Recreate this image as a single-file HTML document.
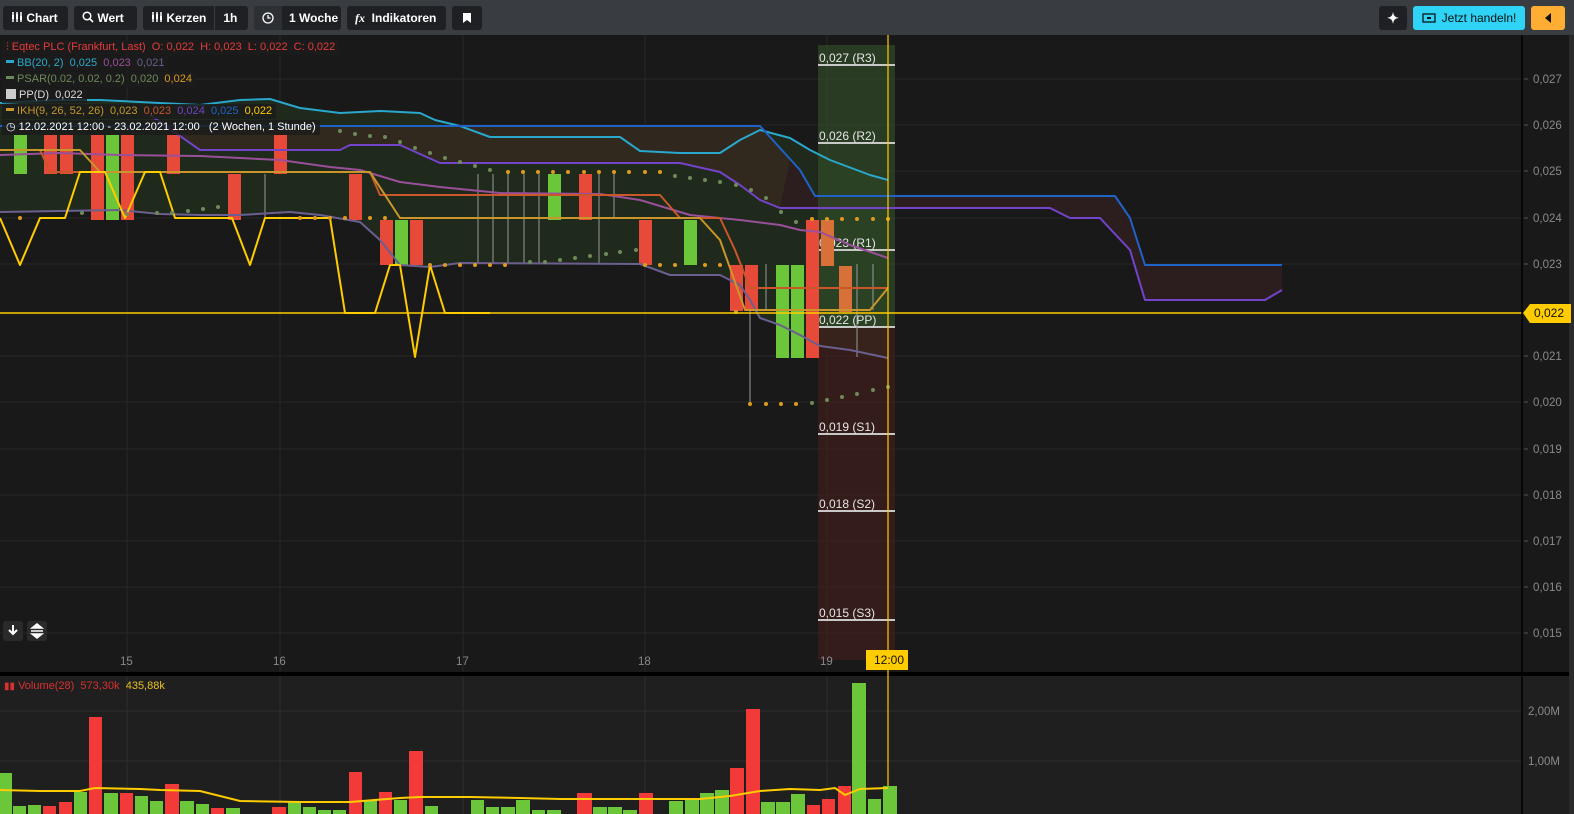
<!DOCTYPE html>
<html><head><meta charset="utf-8"><style>
*{margin:0;padding:0;box-sizing:border-box}
body{width:1574px;height:814px;background:#191919;font-family:"Liberation Sans",Arial,sans-serif;overflow:hidden;position:relative}
#top{position:absolute;left:0;top:0;width:1574px;height:35px;background:#393c41}
.b{position:absolute;top:6px;height:24px;background:#1e2024;border-radius:3px;color:#fff;font-size:12px;font-weight:bold;line-height:24px;display:flex;align-items:center;white-space:nowrap;overflow:hidden}
.b span{padding:0 8px;white-space:nowrap}
.leg{position:absolute;left:2px;font-size:11px;height:15px;line-height:15px;background:rgba(28,28,28,.85);padding:0 4px;white-space:nowrap}
</style></head><body>
<div id="top">
 <div class="b" style="left:3px;width:65px"><span><svg width="12" height="12" viewBox="0 0 12 12" style="vertical-align:-1px"><g stroke="#fff" stroke-width="1.5"><path d="M2 1v10M6 1v10M10 1v10"/></g><rect x="1" y="4" width="2" height="4" fill="#fff"/><rect x="5" y="3" width="2" height="5" fill="#fff"/><rect x="9" y="5" width="2" height="4" fill="#fff"/></svg> Chart</span></div>
 <div class="b" style="left:74px;width:63px"><span><svg width="12" height="12" viewBox="0 0 12 12" style="vertical-align:-1px"><circle cx="5" cy="5" r="3.8" stroke="#fff" stroke-width="1.5" fill="none"/><path d="M8 8l3 3" stroke="#fff" stroke-width="1.6"/></svg> Wert</span></div>
 <div class="b" style="left:143px;width:105px"><span><svg width="12" height="12" viewBox="0 0 12 12" style="vertical-align:-1px"><g stroke="#fff" stroke-width="1.5"><path d="M2 1v10M6 1v10M10 1v10"/></g><rect x="1" y="4" width="2" height="4" fill="#fff"/><rect x="5" y="3" width="2" height="5" fill="#fff"/><rect x="9" y="5" width="2" height="4" fill="#fff"/></svg> Kerzen</span><span style="border-left:1px solid #393c41;padding:0 8px">1h</span></div>
 <div class="b" style="left:254px;width:87px"><span style="background:#2c2f33;height:24px;padding:0 8px;border-radius:3px 0 0 3px;display:flex;align-items:center"><svg width="12" height="12" viewBox="0 0 12 12"><circle cx="6" cy="6" r="5" stroke="#fff" stroke-width="1.3" fill="none"/><path d="M6 3v3h2.5" stroke="#fff" stroke-width="1.3" fill="none"/></svg></span><span style="padding:0 0 0 7px">1 Woche</span></div>
 <div class="b" style="left:347px;width:99px"><span><i style="font-family:'Liberation Serif';font-weight:bold">fx</i>&nbsp; Indikatoren</span></div>
 <div class="b" style="left:452px;width:30px;justify-content:center"><svg width="8" height="10"><path d="M0 0h8v10L4 7 0 10z" fill="#fff"/></svg></div>
 <div class="b" style="left:1379px;width:28px;justify-content:center;color:#fff;font-size:14px">✦</div>
 <div class="b" style="left:1413px;width:112px;background:#2fd3f6;color:#111;font-weight:normal;justify-content:center"><svg width="14" height="10" style="margin-right:6px"><rect x="1" y="1" width="12" height="8" stroke="#111" fill="none" stroke-width="1.3"/><rect x="5" y="4" width="4" height="2" fill="#111"/></svg>Jetzt handeln!</div>
 <div class="b" style="left:1531px;width:34px;background:#ffad33;justify-content:center"><svg width="6" height="10"><path d="M6 0v10L0 5z" fill="#111"/></svg></div>
</div>

<svg style="position:absolute;left:0;top:35px;width:1574px;height:779px" width="1574" height="779" viewBox="0 35 1574 779" preserveAspectRatio="none">
<rect x="0" y="676" width="1574" height="138" fill="#1f1f1f"/>
<rect x="0" y="672" width="1574" height="4" fill="#000"/>
<rect x="1569" y="35" width="5" height="779" fill="#2a2a2a"/>
<g stroke="#262626" stroke-width="1">
<path d="M0 79H1522M0 125H1522M0 171H1522M0 218H1522M0 264H1522M0 356H1522M0 402H1522M0 449H1522M0 495H1522M0 541H1522M0 587H1522M0 633H1522"/>
<path d="M127 35V672M280 35V672M463 35V672M645 35V672M827 35V672"/>
<path d="M0 711H1522M0 761H1522M127 676V814M280 676V814M463 676V814M645 676V814M827 676V814" stroke="#2c2c2c"/>
</g>
<polygon fill="#1f291c" points="0,103 60,100 100,100 200,105 240,100 270,99 300,108 340,113 380,111 420,113 435,120 460,126 490,137 620,137 640,151 680,153 720,153 740,140 760,130 790,138 810,150 830,160 870,175 888,180 888,358 850,350 820,346 800,335 780,325 760,318 750,300 740,285 720,275 670,275 640,264 460,263 430,267 400,265 380,240 360,222 320,215 290,212 240,215 200,215 160,214 120,210 60,211 0,212"/>
<polygon fill="#33291f" opacity=".9" points="150,126 760,126 780,148 790,160 780,208 760,200 740,185 720,172 680,163 440,163 400,145 350,145 340,150 200,150 150,115"/>
<polygon fill="#2c1e1e" points="790,160 800,170 815,196 1115,196 1130,218 1145,265 1282,265 1282,290 1265,300 1145,300 1130,250 1100,218 1070,218 1050,208 780,208"/>
<rect x="818" y="45" width="77" height="282" fill="#34512a" opacity=".6"/>
<rect x="818" y="327" width="77" height="333" fill="#4a1f1c" opacity=".55"/>
<g stroke="#c8c8c8" stroke-width="2"><path d="M818 65H895M818 143H895M818 250H895M818 327H895M818 434H895M818 511H895M818 620H895"/></g>
<g fill="#e6e6e6" font-size="12"><text x="819" y="62">0,027 (R3)</text><text x="819" y="140">0,026 (R2)</text><text x="819" y="247">0,023 (R1)</text><text x="819" y="324">0,022 (PP)</text><text x="819" y="431">0,019 (S1)</text><text x="819" y="508">0,018 (S2)</text><text x="819" y="617">0,015 (S3)</text></g>
<g stroke="#9a9a9a" stroke-width="1"><path d="M478 174V264M493 174V264M508 174V264M524 174V264M539 174V264M584 174V218M599 174V264M614 174V218M750 310V402M766 264V310M857 264V357M873 264V310M265 174V218M234 174V220M97 220V135"/></g>
<g>
<rect x="14" y="135" width="13" height="39" fill="#6cc63a"/>
<rect x="44" y="135" width="13" height="39" fill="#e84a3a"/><rect x="60" y="135" width="13" height="39" fill="#e84a3a"/>
<rect x="91" y="135" width="13" height="85" fill="#e84a3a"/><rect x="106" y="135" width="13" height="85" fill="#6cc63a"/><rect x="121" y="135" width="13" height="85" fill="#e84a3a"/>
<rect x="167" y="135" width="13" height="39" fill="#e84a3a"/>
<rect x="228" y="174" width="13" height="46" fill="#e84a3a"/>
<rect x="274" y="135" width="13" height="39" fill="#e84a3a"/>
<rect x="349" y="174" width="13" height="46" fill="#e84a3a"/>
<rect x="380" y="220" width="13" height="45" fill="#e84a3a"/><rect x="395" y="220" width="13" height="45" fill="#6cc63a"/><rect x="410" y="220" width="13" height="45" fill="#e84a3a"/>
<rect x="548" y="174" width="13" height="46" fill="#6cc63a"/>
<rect x="579" y="174" width="13" height="46" fill="#e84a3a"/>
<rect x="639" y="220" width="13" height="45" fill="#e84a3a"/>
<rect x="684" y="220" width="13" height="45" fill="#6cc63a"/>
<rect x="730" y="265" width="13" height="46" fill="#e84a3a"/><rect x="745" y="265" width="13" height="46" fill="#e84a3a"/>
<rect x="776" y="265" width="13" height="93" fill="#6cc63a"/><rect x="791" y="265" width="13" height="93" fill="#6cc63a"/><rect x="806" y="220" width="13" height="138" fill="#e84a3a"/>
<rect x="821" y="220" width="13" height="46" fill="#d8703a"/><rect x="839" y="266" width="13" height="46" fill="#d8703a"/>
</g>
<g fill="none" stroke-width="2" stroke-linejoin="round">
<polyline stroke="#2aa8cc" points="0,103 60,100 100,100 200,105 240,100 270,99 300,108 340,113 380,111 420,113 435,120 460,126 490,137 620,137 640,151 680,153 720,153 740,140 760,130 790,138 810,150 830,160 870,175 888,180"/>
<polyline stroke="#9a4f9a" points="0,155 60,153 120,155 200,156 280,160 330,167 360,170 400,182 440,187 500,193 600,194 640,200 690,215 740,220 780,225 800,230 820,232 850,245 888,258"/>
<polyline stroke="#6a5f8f" points="0,212 60,211 120,210 160,214 200,215 240,215 290,212 320,215 360,222 380,240 400,265 430,267 460,263 640,264 670,275 720,275 740,285 750,300 760,318 780,325 800,335 820,346 850,350 888,358"/>
<polyline stroke="#1f63c7" points="0,126 760,126 780,148 800,170 815,196 1115,196 1130,218 1145,265 1282,265"/>
<polyline stroke="#7344c9" points="150,115 200,150 340,150 350,145 400,145 440,163 680,163 720,172 740,185 760,200 780,208 1050,208 1070,218 1100,218 1130,250 1145,300 1265,300 1282,290"/>
<polyline stroke="#c9572a" points="0,150 40,150 50,172 370,172 380,195 660,195 680,218 720,218 735,250 750,288 888,288"/>
<polyline stroke="#c8962a" points="0,150 80,150 100,172 370,172 400,218 700,218 720,240 745,310 870,310 888,288"/>
<polyline stroke="#ffcc00" points="0,218 20,265 40,218 65,218 80,172 105,172 125,218 145,172 160,172 175,218 232,218 250,265 265,218 330,218 345,313 375,313 390,265 400,265 415,357 430,265 445,313 490,313"/>
</g>
<g fill="#e09a1f">
<circle cx="300" cy="218" r="2"/><circle cx="315" cy="218" r="2"/><circle cx="330" cy="218" r="2"/><circle cx="345" cy="218" r="2"/><circle cx="370" cy="218" r="2"/><circle cx="385" cy="218" r="2"/>
<circle cx="430" cy="265" r="2"/><circle cx="445" cy="265" r="2"/><circle cx="460" cy="265" r="2"/><circle cx="475" cy="265" r="2"/><circle cx="490" cy="265" r="2"/><circle cx="505" cy="265" r="2"/><circle cx="645" cy="265" r="2"/><circle cx="660" cy="265" r="2"/><circle cx="675" cy="265" r="2"/><circle cx="705" cy="265" r="2"/><circle cx="720" cy="265" r="2"/>
<circle cx="508" cy="172" r="2"/><circle cx="523" cy="172" r="2"/><circle cx="538" cy="172" r="2"/><circle cx="553" cy="172" r="2"/><circle cx="568" cy="172" r="2"/><circle cx="584" cy="172" r="2"/><circle cx="599" cy="172" r="2"/><circle cx="614" cy="172" r="2"/><circle cx="629" cy="172" r="2"/><circle cx="645" cy="172" r="2"/><circle cx="660" cy="172" r="2"/>
<circle cx="750" cy="404" r="2"/><circle cx="766" cy="404" r="2"/><circle cx="781" cy="404" r="2"/><circle cx="796" cy="404" r="2"/>
<circle cx="812" cy="219" r="2"/><circle cx="827" cy="219" r="2"/><circle cx="842" cy="219" r="2"/><circle cx="857" cy="219" r="2"/><circle cx="873" cy="219" r="2"/><circle cx="888" cy="219" r="2"/>
<circle cx="736" cy="312" r="2"/><circle cx="20" cy="218" r="2"/>
</g>
<g fill="#6f8a5a">
<circle cx="340" cy="131" r="2"/><circle cx="355" cy="134" r="2"/><circle cx="370" cy="136" r="2"/><circle cx="385" cy="137" r="2"/><circle cx="400" cy="142" r="2"/><circle cx="415" cy="148" r="2"/><circle cx="430" cy="153" r="2"/><circle cx="445" cy="158" r="2"/><circle cx="460" cy="162" r="2"/><circle cx="475" cy="166" r="2"/><circle cx="490" cy="170" r="2"/>
<circle cx="675" cy="176" r="2"/><circle cx="690" cy="178" r="2"/><circle cx="705" cy="180" r="2"/><circle cx="720" cy="182" r="2"/><circle cx="736" cy="185" r="2"/><circle cx="751" cy="190" r="2"/><circle cx="766" cy="198" r="2"/><circle cx="781" cy="212" r="2"/><circle cx="796" cy="222" r="2"/>
<circle cx="530" cy="262" r="2"/><circle cx="545" cy="262" r="2"/><circle cx="560" cy="260" r="2"/><circle cx="575" cy="258" r="2"/><circle cx="590" cy="256" r="2"/><circle cx="606" cy="254" r="2"/><circle cx="620" cy="252" r="2"/><circle cx="636" cy="250" r="2"/>
<circle cx="812" cy="403" r="2"/><circle cx="827" cy="400" r="2"/><circle cx="842" cy="397" r="2"/><circle cx="857" cy="394" r="2"/><circle cx="873" cy="390" r="2"/><circle cx="888" cy="387" r="2"/>
<circle cx="82" cy="213" r="2"/><circle cx="127" cy="214" r="2"/><circle cx="157" cy="213" r="2"/><circle cx="172" cy="213" r="2"/><circle cx="188" cy="211" r="2"/><circle cx="203" cy="209" r="2"/><circle cx="218" cy="207" r="2"/>
</g>
<path d="M0 313H1522" stroke="#ffcc00" stroke-width="1.5"/>
<path d="M888 35V814" stroke="#ffcc00" stroke-width="1.2"/>
<path d="M1522 35V814" stroke="#000" stroke-width="1.5"/>
<g stroke="#555" stroke-width="1"><path d="M1524 79h4M1524 125h4M1524 171h4M1524 218h4M1524 264h4M1524 356h4M1524 402h4M1524 449h4M1524 495h4M1524 541h4M1524 587h4M1524 633h4"/></g>
<g fill="#8a8a8a" font-size="11.5">
<text x="1533" y="83">0,027</text><text x="1533" y="129">0,026</text><text x="1533" y="175">0,025</text><text x="1533" y="222">0,024</text><text x="1533" y="268">0,023</text><text x="1533" y="360">0,021</text><text x="1533" y="406">0,020</text><text x="1533" y="453">0,019</text><text x="1533" y="499">0,018</text><text x="1533" y="545">0,017</text><text x="1533" y="591">0,016</text><text x="1533" y="637">0,015</text>
<text x="1528" y="715">2,00M</text><text x="1528" y="765">1,00M</text>
<text x="120" y="665">15</text><text x="273" y="665">16</text><text x="456" y="665">17</text><text x="638" y="665">18</text><text x="820" y="665">19</text>
</g>
<path d="M1523 313l7-9h41v19h-41z" fill="#ffcc00"/>
<text x="1534" y="317" font-size="12" fill="#111">0,022</text>
<rect x="866" y="650" width="42" height="20" fill="#ffcc00"/>
<text x="874" y="664" font-size="12" fill="#111">12:00</text>
<g fill="#6cc63a">
<rect x="0" y="773" width="12" height="41"/><rect x="13" y="806" width="13" height="8"/><rect x="28" y="805" width="13" height="9"/><rect x="74" y="792" width="13" height="22"/><rect x="104" y="793" width="14" height="21"/><rect x="135" y="796" width="13" height="18"/><rect x="150" y="801" width="13" height="13"/><rect x="180" y="801" width="14" height="13"/><rect x="196" y="804" width="13" height="10"/><rect x="226" y="808" width="14" height="6"/><rect x="288" y="801" width="13" height="13"/><rect x="303" y="807" width="13" height="7"/><rect x="318" y="810" width="13" height="4"/><rect x="333" y="810" width="13" height="4"/><rect x="364" y="800" width="13" height="14"/><rect x="394" y="800" width="13" height="14"/><rect x="425" y="806" width="13" height="8"/><rect x="471" y="800" width="13" height="14"/><rect x="486" y="807" width="13" height="7"/><rect x="501" y="807" width="14" height="7"/><rect x="516" y="800" width="14" height="14"/><rect x="532" y="810" width="13" height="4"/><rect x="547" y="810" width="14" height="4"/><rect x="593" y="807" width="14" height="7"/><rect x="608" y="807" width="14" height="7"/><rect x="623" y="810" width="14" height="4"/><rect x="669" y="801" width="14" height="13"/><rect x="685" y="800" width="14" height="14"/><rect x="700" y="793" width="14" height="21"/><rect x="715" y="790" width="14" height="24"/><rect x="761" y="802" width="14" height="12"/><rect x="776" y="802" width="14" height="12"/><rect x="791" y="794" width="14" height="20"/><rect x="852" y="683" width="14" height="131"/><rect x="868" y="799" width="13" height="15"/><rect x="883" y="786" width="14" height="28"/>
</g>
<g fill="#f23b38">
<rect x="43" y="806" width="13" height="8"/><rect x="59" y="802" width="13" height="12"/><rect x="89" y="717" width="13" height="97"/><rect x="120" y="793" width="13" height="21"/><rect x="165" y="784" width="14" height="30"/><rect x="211" y="808" width="13" height="6"/><rect x="272" y="807" width="14" height="7"/><rect x="349" y="772" width="13" height="42"/><rect x="379" y="792" width="13" height="22"/><rect x="409" y="751" width="14" height="63"/><rect x="577" y="793" width="15" height="21"/><rect x="639" y="793" width="14" height="21"/><rect x="730" y="768" width="14" height="46"/><rect x="746" y="709" width="14" height="105"/><rect x="807" y="805" width="13" height="9"/><rect x="822" y="799" width="13" height="15"/><rect x="838" y="786" width="13" height="28"/>
</g>
<polyline fill="none" stroke="#ffcc00" stroke-width="2" points="0,790 40,791 80,791 95,788 140,789 160,790 200,791 240,801 300,802 350,802 400,798 420,797 470,797 520,798 560,799 600,799 650,799 700,799 730,796 760,791 790,789 820,790 835,788 845,795 860,789 888,788"/>
<rect x="3" y="621" width="20" height="20" rx="3" fill="#2a2a2a"/><path d="M13 625v8M9 630l4 4 4-4" stroke="#fff" stroke-width="2" fill="none"/>
<rect x="27" y="621" width="20" height="20" rx="3" fill="#2a2a2a"/><path d="M32 628l5-4 5 4zM32 634l5 4 5-4zM31 631h12" fill="#fff" stroke="#fff" stroke-width="1.5"/>
</svg>

<div class="leg" style="top:40px;color:#e83a3a">⫶ Eqtec PLC (Frankfurt, Last) &nbsp;O: 0,022 &nbsp;H: 0,023 &nbsp;L: 0,022 &nbsp;C: 0,022</div>
<div class="leg" style="top:56px;color:#2aa8cc"><span style="display:inline-block;width:8px;height:3px;background:#2aa8cc;vertical-align:3px"></span> BB(20, 2) &nbsp;0,025 <span style="color:#9a4f9a">&nbsp;0,023</span> <span style="color:#6a5f8f">&nbsp;0,021</span></div>
<div class="leg" style="top:72px;color:#6f8a5a"><span style="display:inline-block;width:8px;height:3px;background:#6f8a5a;vertical-align:3px"></span> PSAR(0.02, 0.02, 0.2) &nbsp;0,020 <span style="color:#e09a1f">&nbsp;0,024</span></div>
<div class="leg" style="top:88px;color:#ddd"><span style="display:inline-block;width:10px;height:10px;background:#ccc;vertical-align:-1px"></span> PP(D) &nbsp;0,022</div>
<div class="leg" style="top:104px;color:#c8962a"><span style="display:inline-block;width:8px;height:3px;background:#c8962a;vertical-align:3px"></span> IKH(9, 26, 52, 26) &nbsp;0,023 <span style="color:#c9572a">&nbsp;0,023</span> <span style="color:#7344c9">&nbsp;0,024</span> <span style="color:#1f63c7">&nbsp;0,025</span> <span style="color:#ffcc00">&nbsp;0,022</span></div>
<div class="leg" style="top:120px;color:#fff">◷ 12.02.2021 12:00 - 23.02.2021 12:00 &nbsp; (2 Wochen, 1 Stunde)</div>
<div style="position:absolute;left:4px;top:680px;font-size:11px;color:#d93030;white-space:nowrap"><span style="font-size:10px">▮▮</span> Volume(28) &nbsp;573,30k &nbsp;<span style="color:#e8c020">435,88k</span></div>
</body></html>
